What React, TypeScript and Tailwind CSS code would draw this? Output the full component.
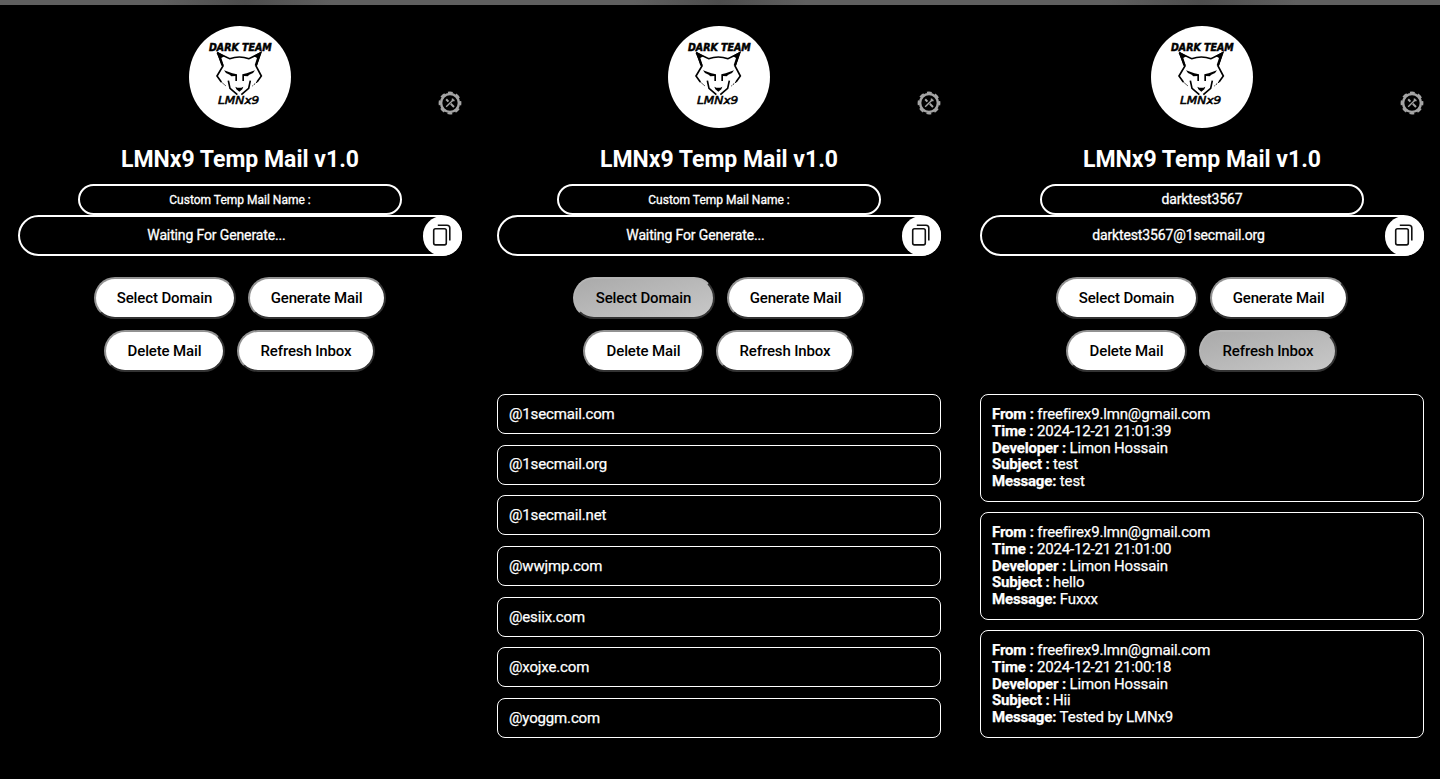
import React from "react";

const domains = [
  "@1secmail.com",
  "@1secmail.org",
  "@1secmail.net",
  "@wwjmp.com",
  "@esiix.com",
  "@xojxe.com",
  "@yoggm.com",
];

const mails = [
  { time: "2024-12-21 21:01:39", subject: "test", message: "test" },
  { time: "2024-12-21 21:01:00", subject: "hello", message: "Fuxxx" },
  { time: "2024-12-21 21:00:18", subject: "Hii", message: "Tested by LMNx9" },
];

function Logo() {
  return (
    <svg viewBox="27 78 306 306" className="h-[102px] w-[102px]" fill="none" stroke="#000" strokeLinejoin="miter">
      <circle cx="180" cy="231" r="153" fill="#fff" stroke="none" />
      <text x="87" y="154" textLength="188" lengthAdjust="spacingAndGlyphs" fontSize="29" fontWeight="700" fontStyle="italic" fill="#000" strokeWidth="1.5" className="font-['DejaVu_Sans',sans-serif]">
        DARK TEAM
      </text>
      <path strokeWidth="5" d="M112 158L129 198L111 228L124 246M113 159L149 176Q178 166 207 176L242 159L228 198L244 228L231 246" />
      <path fill="#000" stroke="none" d="M110 154L134 168L124 174L131 196L124 197ZM245 154L221 168L231 174L224 196L231 197Z" />
      <path strokeWidth="3" strokeDasharray="5 3" d="M124 246L138 258M231 246L217 258" />
      <path strokeWidth="5" d="M145 242L150 265L172 284M211 242L206 265L184 284" />
      <path fill="#000" stroke="none" d="M132 211L157 220L171 223V243H166V228L154 229L149 224L138 219ZM225 211L200 220L187 223V243H192V228L203 229L208 224L219 219ZM166 260L172 263H184L190 260L187 268L178 275L169 268Z" />
      <text x="114" y="312" textLength="124" lengthAdjust="spacingAndGlyphs" fontSize="33" fontStyle="italic" fill="#000" strokeWidth="1.6" className="font-['DejaVu_Sans',sans-serif]">
        LMNx9
      </text>
    </svg>
  );
}

function Gear() {
  return (
    <svg viewBox="0 0 24 24" className="absolute top-[86px] right-[0.5px] h-6 w-6" fill="none" stroke="#a5a5a5">
      <circle cx="12" cy="12" r="8.9" strokeWidth="2.5" />
      <circle cx="12" cy="12" r="10.4" strokeWidth="2" strokeDasharray="4.8 3.37" strokeDashoffset="2.4" />
      <path strokeWidth="2" d="M8.2 8.2L10.4 10.6M12.8 12.8L16 16" />
      <path strokeWidth="1.4" d="M15.6 8.4L8.2 15.8" />
      <path strokeWidth="1.5" d="M14.5 7.4V9.5H16.6" />
    </svg>
  );
}

function CopyIcon() {
  return (
    <svg viewBox="0 0 20 24" className="h-6 w-5" fill="none" stroke="#111" strokeWidth="1.6">
      <rect x="1.7" y="5.7" width="12.6" height="16.2" rx="1.8" />
      <path d="M5.8 2.3H15Q17.8 2.3 17.8 5V17.5" />
    </svg>
  );
}

function Btn({ label, width, active }: { label: string; width: string; active?: boolean }) {
  return (
    <button
      className={`${width} h-[42px] rounded-full border-2 border-r-[#333] border-b-[#333] text-center text-[15px] leading-none font-medium tracking-[-0.13px] whitespace-nowrap text-black ${
        active ? "border-t-[#b4b4b4] border-l-[#b4b4b4] bg-linear-to-br from-[#aaa] to-[#c8c8c8]" : "border-t-[#929292] border-l-[#929292] bg-white"
      }`}
    >
      {label}
    </button>
  );
}

type PanelProps = { name: string; nameClass: string; address: string; active?: string; children?: React.ReactNode };

function Panel({ name, nameClass, address, active, children }: PanelProps) {
  return (
    <section className="relative flex w-[444px] flex-col items-center pt-[21px]">
      <Logo />
      <Gear />
      <div className="mt-4 mb-2 h-8 text-[23px] leading-8 font-bold whitespace-nowrap">LMNx9 Temp Mail v1.0</div>
      <div className={`flex h-[31px] w-[324px] shrink-0 items-center justify-center rounded-full border-2 border-white [-webkit-text-stroke:0.3px_white] ${nameClass}`}>{name}</div>
      <div className="flex h-[41px] w-full shrink-0 items-center rounded-full border-2 border-white">
        <div className="flex-1 pr-[10px] text-center text-[14px] tracking-[-0.13px] [-webkit-text-stroke:0.3px_white]">{address}</div>
        <div className="-mr-0.5 flex h-[40px] w-[39px] items-center justify-center rounded-full bg-white pr-[2px] pb-px">
          <CopyIcon />
        </div>
      </div>
      <div className="mt-[21px] flex gap-3 pr-px">
        <Btn label="Select Domain" width="w-[142px]" active={active === "domain"} />
        <Btn label="Generate Mail" width="w-[138px]" />
      </div>
      <div className="mt-[11px] flex gap-3 pr-px">
        <Btn label="Delete Mail" width="w-[121px]" />
        <Btn label="Refresh Inbox" width="w-[138px]" active={active === "inbox"} />
      </div>
      {children}
    </section>
  );
}

export default function App() {
  return (
    <main className="h-[779px] w-[1440px] overflow-hidden bg-black font-[Roboto,sans-serif] text-white">
      <div className="h-[5px] bg-[linear-gradient(90deg,#5f5f5f_11%,#4d4d4d_17%,#5f5f5f_23%,#5f5f5f_44%,#4d4d4d_50%,#5f5f5f_56%,#5f5f5f_77%,#4d4d4d_83.5%,#5f5f5f_90%)]" />
      <div className="flex pl-[18px]">
        <Panel name="Custom Temp Mail Name :" nameClass="text-[12px]" address="Waiting For Generate..." />
        <div className="w-[35px]" />
        <Panel name="Custom Temp Mail Name :" nameClass="text-[12px]" address="Waiting For Generate..." active="domain">
          <div className="mt-[22px] flex w-full flex-col gap-[10.7px]">
            {domains.map((d) => (
              <div key={d} className="flex h-10 items-center rounded-lg border border-white px-[11px] text-[15px] tracking-[-0.15px] [-webkit-text-stroke:0.25px_white]">
                {d}
              </div>
            ))}
          </div>
        </Panel>
        <div className="w-[39px]" />
        <Panel name="darktest3567" nameClass="text-[14px] tracking-[-0.13px]" address="darktest3567@1secmail.org" active="inbox">
          <div className="mt-[22px] flex w-full flex-col gap-[10px]">
            {mails.map((m) => (
              <div key={m.time} className="h-[108px] rounded-lg border border-white px-[11px] pt-[11px] text-[15px] leading-[16.8px] tracking-[-0.16px] [-webkit-text-stroke:0.25px_white]">
                <p><b>From :</b> freefirex9.lmn@gmail.com</p>
                <p><b>Time :</b> {m.time}</p>
                <p><b>Developer :</b> Limon Hossain</p>
                <p><b>Subject :</b> {m.subject}</p>
                <p><b>Message:</b> {m.message}</p>
              </div>
            ))}
          </div>
        </Panel>
      </div>
    </main>
  );
}
